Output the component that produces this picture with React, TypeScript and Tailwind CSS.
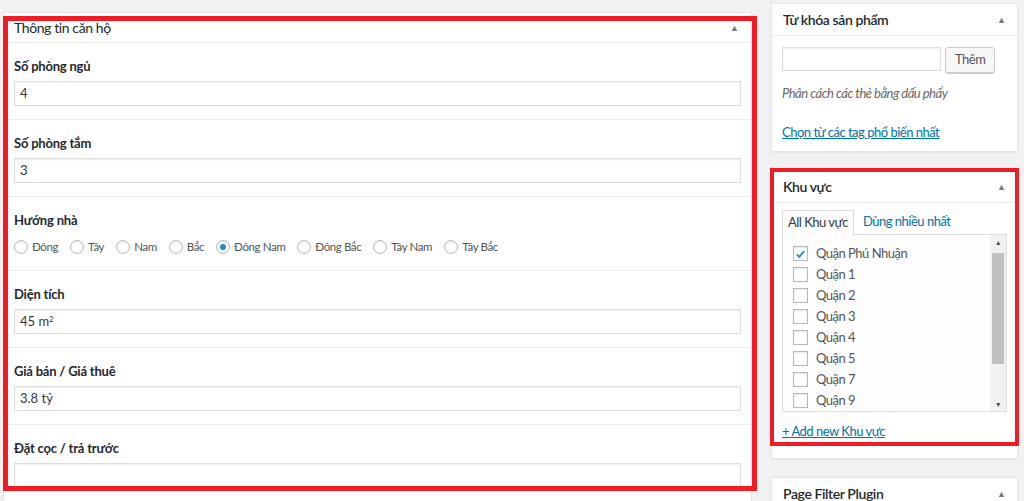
const font = { fontFamily: "Lato, 'Noto Sans', sans-serif" };

const fields = [
  { label: "Số phòng ngủ", value: "4" },
  { label: "Số phòng tắm", value: "3" },
];

const fields2 = [
  { label: "Giá bán / Giá thuê", value: "3.8 tỷ" },
  { label: "Đặt cọc / trả trước", value: "" },
];

const directions = ["Đông", "Tây", "Nam", "Bắc", "Đông Nam", "Đông Bắc", "Tây Nam", "Tây Bắc"];

const districts = ["Quận Phú Nhuận", "Quận 1", "Quận 2", "Quận 3", "Quận 4", "Quận 5", "Quận 7", "Quận 9"];

function Arrow() {
  return <span className="text-[9px] leading-none text-[#72777c]">▲</span>;
}

function Field({ label, value, first }: { label: string; value: React.ReactNode; first?: boolean }) {
  return (
    <div className={`px-[10px] pt-[14px] pb-[13px] ${first ? "" : "border-t border-[#eeeeee]"}`}>
      <div className="text-[13px] font-bold leading-[18px] tracking-[-0.2px] text-[#23282d]">{label}</div>
      <div className="mt-[6px] flex h-[25px] items-center border border-[#dddddd] px-[5px] text-[13px] text-[#32373c] shadow-[inset_0_1px_2px_rgba(0,0,0,0.07)]">
        {value}
      </div>
    </div>
  );
}

function Box({ title, children }: { title: string; children?: React.ReactNode }) {
  return (
    <div className="border border-[#e5e5e5] bg-white shadow-[0_1px_1px_rgba(0,0,0,0.04)]">
      <div className="flex h-[32px] items-center justify-between border-b border-[#eeeeee] px-[11px]">
        <span className="text-[14px] font-semibold tracking-[-0.4px] text-[#23282d]">{title}</span>
        <Arrow />
      </div>
      {children}
    </div>
  );
}

export default function App() {
  return (
    <div className="relative flex h-[501px] w-[1024px] overflow-hidden bg-[#f1f1f1] pl-[3px]" style={font}>
      {/* main meta box */}
      <div className="mt-[12px] w-[749px] self-start border border-[#e5e5e5] bg-white shadow-[0_1px_1px_rgba(0,0,0,0.04)]">
        <div className="flex h-[30px] items-center justify-between border-b border-[#eeeeee] pl-[10px] pr-[12px]">
          <span className="text-[14px] tracking-[-0.4px] text-[#23282d]">Thông tin căn hộ</span>
          <Arrow />
        </div>
        {fields.map((f, i) => (
          <Field key={f.label} label={f.label} value={f.value} first={i === 0} />
        ))}
        <div className="border-t border-[#eeeeee] px-[10px] pt-[14px] pb-[13px]">
          <div className="text-[13px] font-bold leading-[18px] tracking-[-0.2px] text-[#23282d]">Hướng nhà</div>
          <div className="mt-[8px] flex h-[20px] items-center gap-[12px] text-[11.5px] tracking-[-0.4px] text-[#555555]">
            {directions.map((d) => (
              <label key={d} className="flex items-center gap-[4px]">
                <span className="flex h-[14px] w-[14px] items-center justify-center rounded-full border border-[#b4b9be] bg-white shadow-[inset_0_1px_2px_rgba(0,0,0,0.1)]">
                  {d === "Đông Nam" && <span className="h-[6px] w-[6px] rounded-full bg-[#1e8cbe]" />}
                </span>
                {d}
              </label>
            ))}
          </div>
        </div>
        <Field
          label="Diện tích"
          value={
            <span>
              45 m<sup className="text-[8px]">2</sup>
            </span>
          }
        />
        {fields2.map((f) => (
          <Field key={f.label} label={f.label} value={f.value} />
        ))}
      </div>

      {/* sidebar */}
      <div className="ml-[19px] mt-[3px] flex w-[247px] flex-col gap-[18px] self-start">
        <Box title="Từ khóa sản phẩm">
          <div className="px-[10px] pt-[11px] pb-[10px] tracking-[-0.5px]">
            <div className="flex items-start gap-[4px]">
              <div className="h-[24px] w-[159px] border border-[#dddddd] shadow-[inset_0_1px_2px_rgba(0,0,0,0.07)]" />
              <button className="h-[26px] rounded-[3px] border border-[#cccccc] bg-[#f7f7f7] px-[9px] text-[13px] text-[#555555] shadow-[0_1px_0_#cccccc]">
                Thêm
              </button>
            </div>
            <p className="mt-[11px] text-[13px] leading-[18px] italic text-[#666666]">Phân cách các thẻ bằng dấu phẩy</p>
            <p className="mt-[21px] text-[13px] leading-[18px] text-[#0073aa] underline">Chọn từ các tag phổ biến nhất</p>
          </div>
        </Box>

        <Box title="Khu vực">
          <div className="px-[10px] pt-[7px] pb-[18px] tracking-[-0.5px]">
            <div className="flex items-end text-[13px]">
              <div className="-mb-px flex h-[25px] items-center border border-b-0 border-[#dddddd] bg-[#fdfdfd] px-[5px] text-[#32373c]">
                All Khu vực
              </div>
              <div className="flex h-[24px] items-center px-[9px] text-[#0073aa]">Dùng nhiều nhất</div>
            </div>
            <div className="flex h-[178px] w-[225px] border border-[#dddddd] bg-[#fdfdfd]">
              <div className="flex-1 pl-[10px] pt-[8px]">
                {districts.map((d, i) => (
                  <div key={d} className="flex h-[21px] items-center gap-[8px] text-[13px] text-[#555555]">
                    <span className="flex h-[15px] w-[15px] items-center justify-center border border-[#b4b9be] bg-white shadow-[inset_0_1px_2px_rgba(0,0,0,0.1)]">
                      {i === 0 && (
                        <svg viewBox="0 0 16 16" className="h-[14px] w-[14px]">
                          <path d="M3.5 8.5l3 3 6-7" fill="none" stroke="#1e8cbe" strokeWidth="2.2" />
                        </svg>
                      )}
                    </span>
                    {d}
                  </div>
                ))}
              </div>
              <div className="flex w-[16px] flex-col items-center bg-[#f1f1f1]">
                <span className="mt-[3px] text-[7px] leading-[8px] text-[#505050]">▲</span>
                <div className="mt-[7px] h-[111px] w-[12px] bg-[#c1c1c1]" />
                <div className="flex-1" />
                <span className="mb-[3px] text-[7px] leading-[8px] text-[#505050]">▼</span>
              </div>
            </div>
            <p className="mt-[10px] text-[13px] leading-[18px] text-[#0073aa] underline">+ Add new Khu vực</p>
          </div>
        </Box>

        <Box title="Page Filter Plugin">
          <div className="h-[40px]" />
        </Box>
      </div>

      {/* annotations */}
      <div className="pointer-events-none absolute left-[3px] top-[16px] h-[475px] w-[754px] border-[5px] border-[#ee1c25]" />
      <div className="pointer-events-none absolute left-[770px] top-[168px] h-[278px] w-[249px] border-[4px] border-[#ee1c25]" />
    </div>
  );
}
